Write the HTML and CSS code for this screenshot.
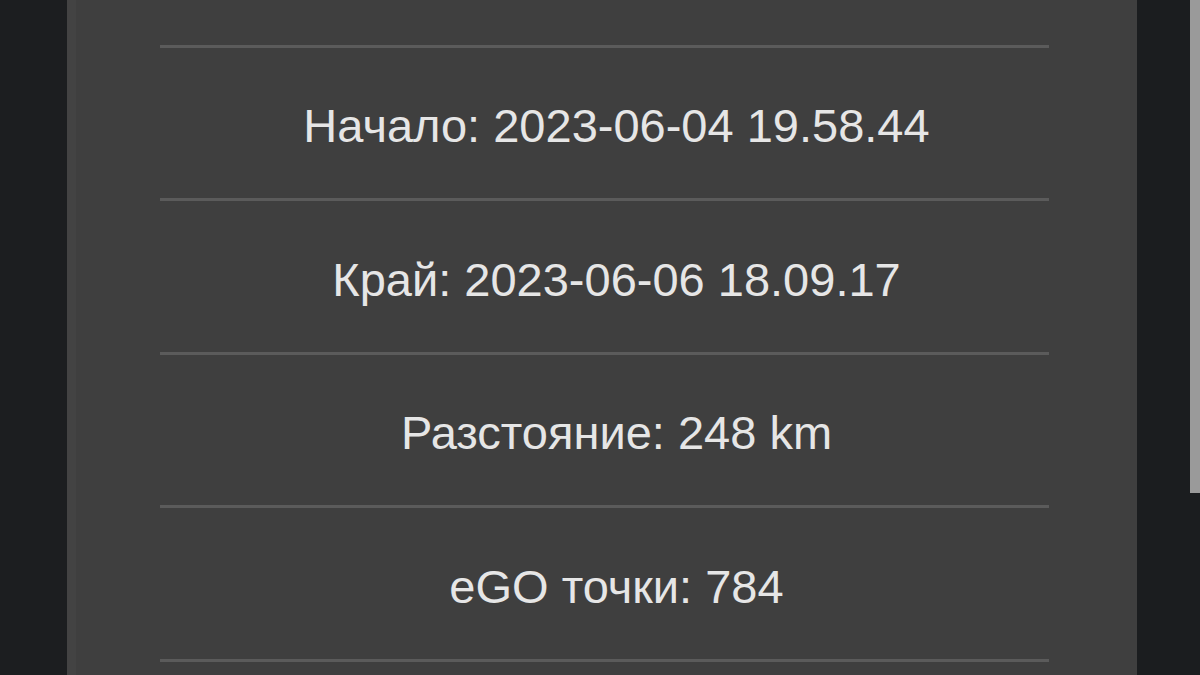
FILE: index.html
```html
<!DOCTYPE html>
<html lang="bg">
<head>
<meta charset="utf-8">
<title>Пътуване</title>
<link rel="stylesheet" href="styles.css">
</head>
<body>
<div class="screen">
  <div class="side-left"></div>
  <main class="panel">
    <ul class="list">
      <li class="row"><span class="label">&nbsp;</span></li>
      <li class="row"><span class="label">Начало: 2023-06-04 19.58.44</span></li>
      <li class="row"><span class="label">Край: 2023-06-06 18.09.17</span></li>
      <li class="row"><span class="label">Разстояние: 248 km</span></li>
      <li class="row"><span class="label">eGO точки: 784</span></li>
      <li class="row"><span class="label">&nbsp;</span></li>
    </ul>
  </main>
  <div class="side-right">
    <div class="scroll-thumb"></div>
  </div>
</div>
</body>
</html>
```

FILE: styles.css
```css
html, body {
  margin: 0;
  padding: 0;
  background: #1c1e20;
  overflow: hidden;
}

.screen {
  display: flex;
  width: 1200px;
  height: 675px;
  overflow: hidden;
  font-family: "Liberation Sans", Arial, sans-serif;
}

.side-left {
  width: 67px;
  flex: none;
  background: #1c1e20;
}

.panel {
  width: 1070px;
  flex: none;
  box-sizing: border-box;
  background: #3f3f3f;
  border-left: 9px solid #434343;
  padding: 0 88px 0 84px;
  overflow: hidden;
}

.list {
  list-style: none;
  margin: -106px 0 0 0;
  padding: 0;
}

.row {
  height: 144.5px;
  border-bottom: 3px solid #5b5b5b;
  display: flex;
  align-items: center;
  justify-content: center;
  padding: 6px 0 0 24px;
  box-sizing: content-box;
}

.label {
  color: #e6e6e6;
  font-size: 47px;
  line-height: 1;
  white-space: nowrap;
}

.side-right {
  flex: 1;
  display: flex;
  justify-content: flex-end;
  align-items: flex-start;
  background: #1b1d1f;
}

.scroll-thumb {
  width: 10px;
  height: 493px;
  background: #9a9a9a;
}
```
